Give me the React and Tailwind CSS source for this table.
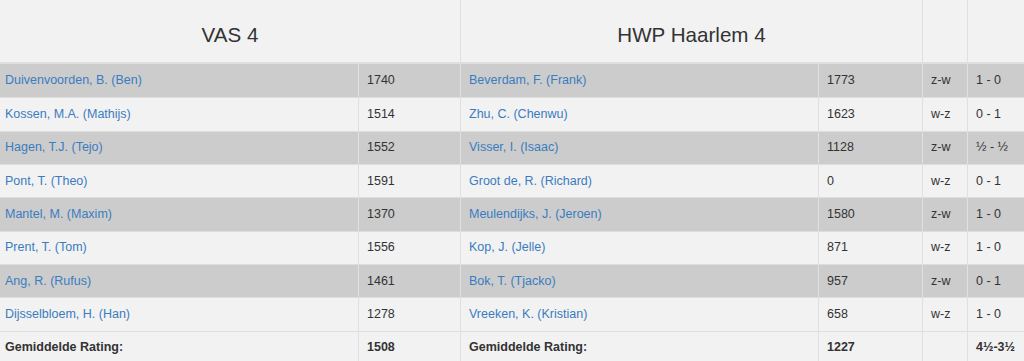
import React from "react";

const rows = [
  ["Duivenvoorden, B. (Ben)", "1740", "Beverdam, F. (Frank)", "1773", "z-w", "1 - 0"],
  ["Kossen, M.A. (Mathijs)", "1514", "Zhu, C. (Chenwu)", "1623", "w-z", "0 - 1"],
  ["Hagen, T.J. (Tejo)", "1552", "Visser, I. (Isaac)", "1128", "z-w", "½ - ½"],
  ["Pont, T. (Theo)", "1591", "Groot de, R. (Richard)", "0", "w-z", "0 - 1"],
  ["Mantel, M. (Maxim)", "1370", "Meulendijks, J. (Jeroen)", "1580", "z-w", "1 - 0"],
  ["Prent, T. (Tom)", "1556", "Kop, J. (Jelle)", "871", "w-z", "1 - 0"],
  ["Ang, R. (Rufus)", "1461", "Bok, T. (Tjacko)", "957", "z-w", "0 - 1"],
  ["Dijsselbloem, H. (Han)", "1278", "Vreeken, K. (Kristian)", "658", "w-z", "1 - 0"],
];

const cols = "grid grid-cols-[358px_102px_358px_104px_45px_57px]";

export default function App() {
  return (
    <div
      className="w-[1024px] h-[361px] overflow-hidden bg-[#f2f2f2] text-[#333] text-[12.5px]"
      style={{ fontFamily: '"Liberation Sans", Arial, sans-serif' }}
    >
      <div className={`${cols} h-[64px] border-b-2 border-[#dedede]`}>
        <div className="col-span-2 flex items-center justify-center text-[20.6px] text-[#333] pt-[8px]">VAS 4</div>
        <div className="col-span-2 border-l border-[#e0e0e0] flex items-center justify-center text-[20.6px] pt-[8px]">HWP Haarlem 4</div>
        <div className="border-l border-[#e0e0e0]"></div>
        <div className="border-l border-[#e0e0e0]"></div>
      </div>
      {rows.map((r, i) => (
        <div
          key={i}
          className={`${cols} h-[33.33px] ${i > 0 ? "border-t border-[#dedede]" : ""} ${i % 2 === 0 ? "bg-[#cccccc]" : "bg-[#f2f2f2]"}`}
        >
          <div className="flex items-center pl-[5px] text-[#3a7cc0]">{r[0]}</div>
          <div className="flex items-center pl-[8px] border-l border-[#e0e0e0]">{r[1]}</div>
          <div className="flex items-center pl-[8px] border-l border-[#e0e0e0] text-[#3a7cc0]">{r[2]}</div>
          <div className="flex items-center pl-[8px] border-l border-[#e0e0e0]">{r[3]}</div>
          <div className="flex items-center pl-[8px] border-l border-[#e0e0e0]">{r[4]}</div>
          <div className="flex items-center pl-[8px] border-l border-[#e0e0e0]">{r[5]}</div>
        </div>
      ))}
      <div className={`${cols} h-[33.33px] border-t border-[#dedede] font-bold`}>
        <div className="flex items-center pl-[5px]">Gemiddelde Rating:</div>
        <div className="flex items-center pl-[8px] border-l border-[#e0e0e0]">1508</div>
        <div className="flex items-center pl-[8px] border-l border-[#e0e0e0]">Gemiddelde Rating:</div>
        <div className="flex items-center pl-[8px] border-l border-[#e0e0e0]">1227</div>
        <div className="flex items-center pl-[8px] border-l border-[#e0e0e0]"></div>
        <div className="flex items-center pl-[8px] border-l border-[#e0e0e0]">4½-3½</div>
      </div>
    </div>
  );
}
